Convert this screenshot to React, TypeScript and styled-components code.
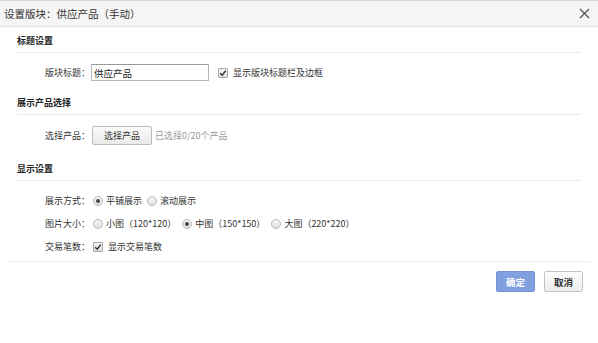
import React from "react";
import styled, { createGlobalStyle, css } from "styled-components";

const Global = createGlobalStyle`
  html, body { margin: 0; padding: 0; background: #fff; }
  body {
    font-family: "Noto Sans CJK SC", "Liberation Sans", sans-serif;
    font-size: 9px;
    color: #333;
  }
  * { box-sizing: border-box; }
`;

const Dialog = styled.div`
  width: 598px;
  height: 343px;
  background: #fff;
  display: flex;
  flex-direction: column;
`;

const Header = styled.div`
  height: 27px;
  border-top: 1px solid #d4d4d4;
  border-bottom: 1px solid #e2e2e2;
  background: #f5f5f5;
  display: flex;
  align-items: center;
  justify-content: space-between;
  padding: 0 8px 0 4px;
`;

const Title = styled.div`
  font-size: 10.5px;
  line-height: 14px;
  color: #333;
`;

const Close = styled.button`
  border: 0;
  background: none;
  padding: 0;
  width: 12px;
  height: 12px;
  display: flex;
  align-items: center;
  justify-content: center;
  cursor: pointer;
`;

const Body = styled.div`
  padding: 0 17px;
`;

const SectionTitle = styled.div`
  font-weight: bold;
  font-size: 9px;
  line-height: 12px;
  padding: 8px 0 5px;
  border-bottom: 1px solid #ebebeb;
  color: #222;
`;

const Rows = styled.div<{ $pb: number }>`
  padding: 8px 0 ${(p) => p.$pb}px;
  display: flex;
  flex-direction: column;
`;

const Row = styled.div<{ $tall?: boolean }>`
  display: flex;
  align-items: center;
  min-height: ${(p) => (p.$tall ? 25 : 23)}px;
`;

const Label = styled.span`
  width: 73px;
  text-align: right;
  flex: none;
  color: #333;
`;

const TextInput = styled.input`
  margin-left: 1px;
  width: 118px;
  height: 17px;
  border: 1px solid #b5b5b5;
  border-top-color: #999;
  padding: 0 2px;
  font-family: inherit;
  font-size: 9.5px;
  color: #222;
  outline: none;
`;

const CheckWrap = styled.label<{ $ml?: number }>`
  display: inline-flex;
  align-items: center;
  margin-left: ${(p) => p.$ml ?? 0}px;
  color: #333;
  cursor: pointer;
`;

const Box = styled.span`
  width: 10px;
  height: 10px;
  border: 1px solid #a8a8a8;
  border-radius: 1px;
  background: linear-gradient(#f4f4f4, #dedede);
  display: inline-flex;
  align-items: center;
  justify-content: center;
  margin-right: 5px;
`;

const RadioWrap = styled.label<{ $ml?: number }>`
  display: inline-flex;
  align-items: center;
  margin-left: ${(p) => p.$ml ?? 0}px;
  color: #333;
  cursor: pointer;
`;

const Dot = styled.span<{ $on?: boolean }>`
  width: 10px;
  height: 10px;
  border-radius: 50%;
  border: 1px solid #b8b8b8;
  background: linear-gradient(#f6f6f6, #e2e2e2);
  margin-right: 3px;
  display: inline-flex;
  align-items: center;
  justify-content: center;
  ${(p) =>
    p.$on &&
    css`
      &::after {
        content: "";
        width: 4px;
        height: 4px;
        border-radius: 50%;
        background: #444;
      }
    `}
`;

const PickButton = styled.button`
  margin-left: 2px;
  width: 60px;
  height: 19px;
  border: 1px solid #bdbdbd;
  border-radius: 2px;
  background: linear-gradient(#fbfbfb, #e9e9e9);
  font-family: inherit;
  font-size: 9px;
  color: #333;
  padding: 0;
`;

const Hint = styled.span`
  margin-left: 3px;
  color: #9a9a9a;
`;

const Footer = styled.div`
  margin: 0 8px;
  border-top: 1px solid #ededed;
  display: flex;
  justify-content: flex-end;
  gap: 9px;
  padding: 9px 7px 0 0;
`;

const ActionButton = styled.button<{ $primary?: boolean }>`
  width: 39px;
  height: 21px;
  border-radius: 2px;
  font-family: inherit;
  font-size: 9.5px;
  font-weight: bold;
  padding: 0;
  ${(p) =>
    p.$primary
      ? css`
          border: 1px solid #7494d6;
          background: #80a0e0;
          color: #fff;
        `
      : css`
          border: 1px solid #c4c4c4;
          background: linear-gradient(#fcfcfc, #ececec);
          color: #333;
        `}
`;

const Tick = () => (
  <svg width="8" height="8" viewBox="0 0 8 8">
    <path d="M1.2 4.2 L3.2 6.2 L6.8 1.6" fill="none" stroke="#333" strokeWidth="1.5" />
  </svg>
);

export default function App() {
  return (
    <>
      <Global />
      <Dialog>
        <Header>
          <Title>设置版块：供应产品（手动）</Title>
          <Close aria-label="关闭">
            <svg width="11" height="11" viewBox="0 0 11 11">
              <path d="M1 1 L10 10 M10 1 L1 10" stroke="#555" strokeWidth="1.3" />
            </svg>
          </Close>
        </Header>
        <Body>
          <SectionTitle>标题设置</SectionTitle>
          <Rows $pb={5}>
            <Row>
              <Label>版块标题：</Label>
              <TextInput defaultValue="供应产品" />
              <CheckWrap $ml={9}>
                <Box>
                  <Tick />
                </Box>
                显示版块标题栏及边框
              </CheckWrap>
            </Row>
          </Rows>
          <SectionTitle>展示产品选择</SectionTitle>
          <Rows $pb={7}>
            <Row $tall>
              <Label>选择产品：</Label>
              <PickButton>选择产品</PickButton>
              <Hint>已选择0/20个产品</Hint>
            </Row>
          </Rows>
          <SectionTitle>显示设置</SectionTitle>
          <Rows $pb={3}>
            <Row>
              <Label>展示方式：</Label>
              <RadioWrap $ml={3}>
                <Dot $on />
                平铺展示
              </RadioWrap>
              <RadioWrap $ml={5}>
                <Dot />
                滚动展示
              </RadioWrap>
            </Row>
            <Row>
              <Label>图片大小：</Label>
              <RadioWrap $ml={3}>
                <Dot />
                小图（120*120）
              </RadioWrap>
              <RadioWrap $ml={6}>
                <Dot $on />
                中图（150*150）
              </RadioWrap>
              <RadioWrap $ml={6}>
                <Dot />
                大图（220*220）
              </RadioWrap>
            </Row>
            <Row>
              <Label>交易笔数：</Label>
              <CheckWrap $ml={3}>
                <Box>
                  <Tick />
                </Box>
                显示交易笔数
              </CheckWrap>
            </Row>
          </Rows>
        </Body>
        <Footer>
          <ActionButton $primary>确定</ActionButton>
          <ActionButton>取消</ActionButton>
        </Footer>
      </Dialog>
    </>
  );
}
